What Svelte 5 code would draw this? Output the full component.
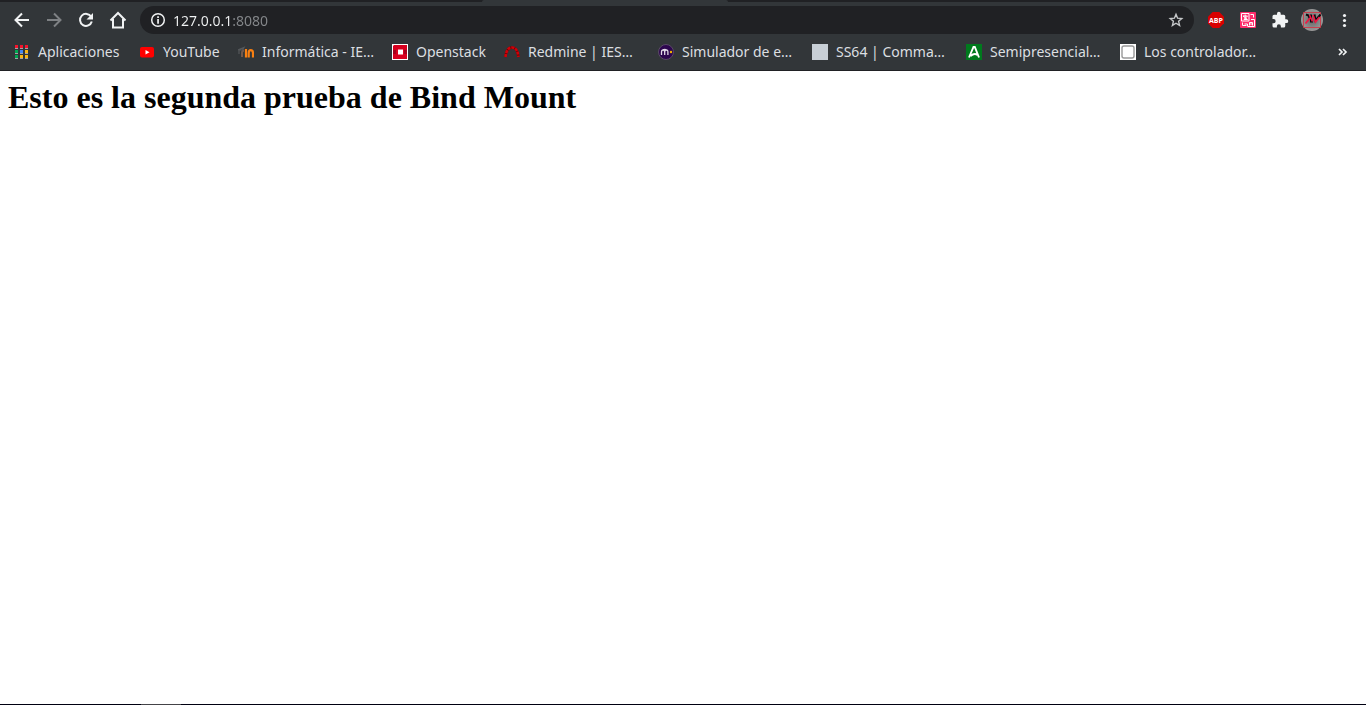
<script>
  let address = $state('127.0.0.1:8080');
  const bookmarks = [
    { icon: 'apps', label: 'Aplicaciones', width: 109 },
    { icon: 'youtube', label: 'YouTube', width: 83 },
    { icon: 'moodle', label: 'Informática - IE…', width: 138 },
    { icon: 'openstack', label: 'Openstack', width: 96 },
    { icon: 'redmine', label: 'Redmine | IES…', width: 138 },
    { icon: 'simulator', label: 'Simulador de e…', width: 138 },
    { icon: 'ss64', label: 'SS64 | Comma…', width: 138 },
    { icon: 'andalucia', label: 'Semipresencial…', width: 138 },
    { icon: 'square', label: 'Los controlador…', width: 138 }
  ];
  const appColors = ['#f5142c', '#f5142c', '#f5142c', '#00a651', '#4285f4', '#fbb612', '#00a651', '#fbb612', '#fbb612'];
</script>

<div class="window">
  <header>
    <div class="tabs"><span class="tab"></span></div>
    <nav class="toolbar" aria-label="Navegación">
      <button class="tool" aria-label="Atrás">
        <svg viewBox="0 0 16 16" width="16" height="16"><path d="M15 8H2M8 1.5 1.5 8 8 14.5" fill="none" stroke="#f1f3f4" stroke-width="2" /></svg>
      </button>
      <button class="tool" aria-label="Adelante">
        <svg viewBox="0 0 16 16" width="16" height="16"><path d="M1 8h13M8 1.5 14.5 8 8 14.5" fill="none" stroke="#7e8184" stroke-width="2" /></svg>
      </button>
      <button class="tool" aria-label="Recargar">
        <svg viewBox="0 0 16 16" width="16" height="16"><path d="M13.2 4.8A6 6 0 1 0 13.8 9.5" fill="none" stroke="#f1f3f4" stroke-width="2" /><path d="M15 1v6.5H8.5z" fill="#f1f3f4" /></svg>
      </button>
      <button class="tool" aria-label="Inicio">
        <svg viewBox="0 0 18 18" width="18" height="18"><path d="M1.5 9.5 9 2l7.500 7.500M4 8v8.500h10V8" fill="none" stroke="#f1f3f4" stroke-width="2" /></svg>
      </button>
      <div class="address">
        <svg viewBox="0 0 16 16" width="16" height="16"><circle cx="8" cy="8" r="6.300" fill="none" stroke="#f1f3f4" stroke-width="1.500" /><path d="M7.200 4.300h1.700V6H7.200zM7.200 7h1.700v4.800H7.200z" fill="#f1f3f4" /></svg>
        <input aria-label="Dirección" bind:value={address} spellcheck="false" />
        <button class="star" aria-label="Añadir a marcadores">
          <svg viewBox="0 0 16 16" width="16" height="16"><path d="m8 2.300 1.600 3.900 4.200.4-3.200 2.700 1 4.100L8 11.200l-3.600 2.200 1-4.100-3.200-2.700 4.200-.4z" fill="none" stroke="#c6c8ca" stroke-width="1.400" /></svg>
        </button>
      </div>
      <div class="extensions">
        <button class="tool" aria-label="Adblock Plus">
          <svg viewBox="0 0 16 16" width="16" height="16"><path d="M4.700 0h6.600L16 4.700v6.600L11.300 16H4.700L0 11.300V4.700z" fill="#d80000" /><text x="8" y="10.500" text-anchor="middle" class="abp">ABP</text></svg>
        </button>
        <button class="tool" aria-label="Traductor">
          <svg viewBox="0 0 16 16" width="16" height="16"><rect width="16" height="16" rx="1" fill="#ff2d6c" /><path d="M1.500 1.500h7.500v7.500H1.500zM10.500 2.500h3v3M2.500 10.500v3h4M11 7.500h3.500v7H8" fill="none" stroke="#fff" /><path d="M3 4h4.500L4 7.500h3.500L3 4m2.200-1.500V8M4.500 12h3v2.500M9.500 13.500v-3h3v3m-3-1.500h3" fill="none" stroke="#fff" /></svg>
        </button>
        <button class="tool" aria-label="Extensiones">
          <svg viewBox="0 0 24 24" width="18" height="18"><path d="M20.500 11H19V7a2 2 0 0 0-2-2h-4V3.500a2.500 2.500 0 0 0-5 0V5H4a2 2 0 0 0-2 2v3.800h1.500a2.700 2.700 0 0 1 0 5.400H2V20a2 2 0 0 0 2 2h3.800v-1.500a2.700 2.700 0 0 1 5.400 0V22H17a2 2 0 0 0 2-2v-4h1.500a2.500 2.500 0 0 0 0-5z" fill="#f1f3f4" /></svg>
        </button>
        <button class="tool" aria-label="Perfil">
          <svg viewBox="0 0 22 22" width="22" height="22"><defs><radialGradient id="disc"><stop stop-color="#646464" /><stop offset="1" stop-color="#999" /></radialGradient></defs><circle cx="11" cy="11" r="11" fill="url(#disc)" /><path d="M2.500 3.500h17v15h-17z" fill="none" stroke="#c6424f" /><path d="M5 5.500 7.500 6.500 9 10M10 5.500v7h2M13.500 5.500l1 6 5-6" fill="none" stroke="#080b0e" stroke-width="2" /><path d="m4.500 14.500 4.500-5.500M8.500 6l3 6.500M12 6l2.500 7 4-5" fill="none" stroke="#f01643" stroke-width="1.700" /></svg>
        </button>
        <button class="tool" aria-label="Menú">
          <svg viewBox="0 0 16 16" width="16" height="16" fill="#f1f3f4"><circle cx="8.500" cy="3.500" r="1.600" /><circle cx="8.500" cy="8.500" r="1.600" /><circle cx="8.500" cy="13.500" r="1.600" /></svg>
        </button>
      </div>
    </nav>
    <nav class="bookmarks" aria-label="Marcadores">
      {#each bookmarks as item}
        <button class="bookmark" style:width="{item.width}px">
          <svg viewBox="0 0 16 16" width="16" height="16" aria-hidden="true">
            {#if item.icon === 'apps'}
              {#each appColors as color, i}
                <rect x={1 + (i % 3) * 5} y={1 + Math.floor(i / 3) * 5} width="3" height="3" fill={color} />
                <rect x={1 + (i % 3) * 5} y={4 + Math.floor(i / 3) * 5} width="3" height="1" fill="#a0a3a5" />
              {/each}
            {:else if item.icon === 'youtube'}
              <rect x="1" y="3" width="14" height="10.500" rx="2" fill="#f00" /><path d="m6.500 6 4 2.300-4 2.300z" fill="#fff" />
            {:else if item.icon === 'moodle'}
              <path d="M4 13V9Q4 6.500 6 6.500" fill="none" stroke="#74594b" stroke-width="2" /><path d="M0 6 6 3.500 4.500 6H1v4" fill="none" stroke="#55585b" stroke-width="1.200" /><path d="M8 13.500V5M10.700 13.500V9Q10.700 6.200 12.800 6.200T15 9v4.500" fill="none" stroke="#f98012" stroke-width="2.200" />
            {:else if item.icon === 'openstack'}
              <path d="M0 0h16v16H0z" fill="#fff" /><path d="M2 1h13v14H1V2z" fill="#d7001f" /><path d="M1 6h3v4H1m11-4h3v4h-3" fill="#a5001c" /><path d="M6 5.500h5v5H6z" fill="#fff" />
            {:else if item.icon === 'redmine'}
              <path d="M1.500 13Q2.500 3.500 8 3.500T14.500 13" fill="none" stroke="#700004" stroke-width="2.400" /><path d="M1.500 13Q2.500 3.500 8 3.500T14.500 13" fill="none" stroke="#d00008" stroke-width="2.600" stroke-dasharray="3 1" />
            {:else if item.icon === 'simulator'}
              <circle cx="8" cy="8" r="7.500" fill="#2d064f" stroke="#5a4966" /><path d="M3.500 11V8q0-2 1.600-2t1.600 2v3m0-3q0-2 1.600-2t1.600 2v3M5 6q2.500-1.500 5 1" fill="none" stroke="#e2d9e8" stroke-width="1.300" /><circle cx="13" cy="8" r="1.200" fill="#f1b500" />
            {:else if item.icon === 'ss64'}
              <path d="M0 0h16v16H0z" fill="#c7ced5" />
            {:else if item.icon === 'andalucia'}
              <path d="M0 0h16v16H0z" fill="#007a1d" /><path d="M3 13.500 7.500 3h1.300L13 13.500M4.500 12q4-3.500 7-1" fill="none" stroke="#fff" stroke-width="1.900" />
            {:else}
              <path d="M0 0h16v16H0z" fill="#fff" /><rect x="2" y="2" width="12" height="12" rx="2" fill="#fff" stroke="#999" stroke-width="1.400" />
            {/if}
          </svg>
          <span>{item.label}</span>
        </button>
      {/each}
      <button class="more" aria-label="Más marcadores">
        <svg viewBox="0 0 10 10" width="10" height="10"><path d="m1 2 3 3-3 3m4-6 3 3-3 3" fill="none" stroke="#f1f3f4" stroke-width="1.700" /></svg>
      </button>
    </nav>
  </header>
  <main><h1>Esto es la segunda prueba de Bind Mount</h1></main>
  <footer><span></span></footer>
</div>

<style>
  :global(body) { margin: 0; background: #fff; }
  .window { display: flex; flex-direction: column; min-height: 100vh; }
  header { background: #323639; border-bottom: 1px solid #202124; font-family: "Noto Sans", sans-serif; }
  button { display: flex; align-items: center; justify-content: center; padding: 0; border: 0; background: none; font: inherit; color: inherit; }
  svg { display: block; flex: none; }
  .tabs { display: flex; height: 2px; background: #202124; }
  .tab { width: 18%; margin-left: 35.3%; background: #323639; border-radius: 2px 2px 0 0; }
  .toolbar { display: flex; align-items: center; height: 36px; padding: 0 6px; }
  .tool { width: 32px; height: 32px; flex: none; }
  .address { display: flex; align-items: center; flex: 1; min-width: 0; height: 28px; box-sizing: border-box; margin-left: 6px; padding: 0 10px; border-radius: 14px; background: #202124; }
  .address input { flex: 1; min-width: 0; height: 24px; margin-left: 7px; padding: 0; border: 0; outline: 0; font: 14px/20px "Noto Sans", sans-serif; color: transparent; caret-color: #fff; background: linear-gradient(90deg, #f1f3f4 59px, #85888b 59px); background-clip: text; -webkit-background-clip: text; }
  .star { width: 16px; height: 24px; }
  .extensions { display: flex; align-items: center; margin-left: 6px; }
  .abp { font: bold 7px "Open Sans", sans-serif; fill: #fff; }
  .bookmarks { display: flex; align-items: center; gap: 16px; height: 28px; padding: 0 18px 4px 14px; color: #dcdfe1; font-size: 14px; line-height: 20px; overflow: hidden; }
  .bookmark { gap: 8px; justify-content: flex-start; flex: none; white-space: nowrap; height: 28px; }
  .more { margin-left: auto; width: 10px; height: 24px; }
  main { flex: 1; padding: 8px; }
  h1 { margin: 0; font: bold 32px/37px "Liberation Serif", serif; color: #000; }
  footer { height: 1px; background: #000011; }
  footer span { display: block; width: 40px; height: 1px; margin-left: 141px; background: #444348; }
</style>
